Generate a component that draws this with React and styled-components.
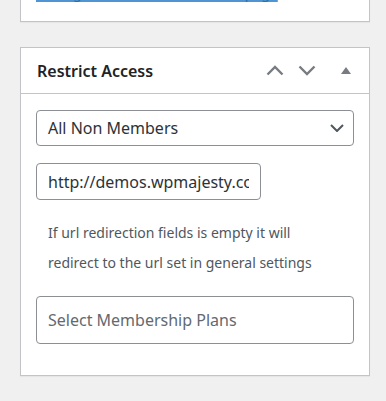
import React from 'react'
import styled, { createGlobalStyle } from 'styled-components'

const GlobalStyle = createGlobalStyle`
    html, body {
        margin: 0;
        padding: 0;
        background: #f0f0f1;
        font-family: "Segoe UI", "Noto Sans", sans-serif;
        color: #1d2327;
    }
`

const Sidebar = styled.div`
    width: 350px;
    padding: 0 16px 0 20px;
    overflow: hidden;
    height: 401px;
`

const Postbox = styled.div`
    background: #fff;
    border: 1px solid #c3c4c7;
    box-shadow: 0 1px 1px rgba(0, 0, 0, 0.04);
    margin-bottom: 25px;
`

const ClippedBox = styled(Postbox)`
    margin-top: -17px;
    border-top: none;
    padding: 0 15px 18px;
    font-size: 14px;
    line-height: 20px;
`

const SettingsLink = styled.a`
    color: #2271b1;
    text-decoration: underline;
    text-decoration-color: #4f94d4;
    text-decoration-thickness: 2px;
    text-underline-offset: 2px;
    text-decoration-skip-ink: none;
`

const Header = styled.div`
    display: flex;
    align-items: center;
    height: 45px;
    border-bottom: 1px solid #c3c4c7;
    padding-left: 16px;
`

const Title = styled.h2`
    flex: 1;
    margin: 0;
    font-size: 16px;
    font-weight: 600;
    color: #1d2327;
`

const HandleButton = styled.button`
    width: ${p => p.w}px;
    height: 36px;
    padding: 0;
    border: none;
    background: none;
    display: flex;
    align-items: center;
    justify-content: center;
    color: #787c82;
`

const Inside = styled.div`
    padding: 16px 15px 31px;
    display: flex;
    flex-direction: column;
    align-items: flex-start;
`

const Select = styled.div`
    box-sizing: border-box;
    width: 100%;
    height: 36px;
    border: 1px solid #8c8f94;
    border-radius: 4px;
    display: flex;
    align-items: center;
    justify-content: space-between;
    padding: 0 9px 0 11px;
    font-size: 16px;
    color: #2c3338;
`

const UrlInput = styled.input`
    box-sizing: border-box;
    margin-top: 17px;
    width: 225px;
    height: 37px;
    border: 1px solid #8c8f94;
    border-radius: 4px;
    padding: 0 11px;
    font-family: inherit;
    font-size: 16px;
    color: #2c3338;
    outline: none;
`

const Description = styled.p`
    margin: 18px 0 18px;
    padding-left: 12px;
    font-size: 14px;
    line-height: 30px;
    color: #50575e;
`

const PlanPicker = styled.div`
    box-sizing: border-box;
    width: 100%;
    height: 48px;
    border: 1px solid #8c8f94;
    border-radius: 4px;
    display: flex;
    align-items: center;
    padding: 0 11px;
    font-size: 16px;
    color: #646970;
`

const Chevron = ({ up, size = 18 }) => (
    <svg width={size} height={size / 2 + 2} viewBox="0 0 18 11" fill="none">
        <path
            d={up ? 'M1.5 9.5 L9 2 L16.5 9.5' : 'M1.5 1.5 L9 9 L16.5 1.5'}
            stroke="currentColor"
            strokeWidth="2.4"
        />
    </svg>
)

const App = () => {
    return (
        <>
            <GlobalStyle />
            <Sidebar>
                <ClippedBox>
                    <SettingsLink href="#">Manage restriction rules of this page</SettingsLink>
                </ClippedBox>
                <Postbox>
                    <Header>
                        <Title>Restrict Access</Title>
                        <HandleButton w={32}><Chevron up /></HandleButton>
                        <HandleButton w={32}><Chevron /></HandleButton>
                        <HandleButton w={46}>
                            <svg width="10" height="7" viewBox="0 0 10 7">
                                <path d="M0 7 L5 0 L10 7 Z" fill="currentColor" />
                            </svg>
                        </HandleButton>
                    </Header>
                    <Inside>
                        <Select>
                            <span>All Non Members</span>
                            <svg width="14" height="8" viewBox="0 0 14 8" fill="none">
                                <path d="M1 1 L7 7 L13 1" stroke="#50575e" strokeWidth="2" />
                            </svg>
                        </Select>
                        <UrlInput defaultValue="http://demos.wpmajesty.com/membership/login" />
                        <Description>
                            If url redirection fields is empty it will<br />
                            redirect to the url set in general settings
                        </Description>
                        <PlanPicker>Select Membership Plans</PlanPicker>
                    </Inside>
                </Postbox>
            </Sidebar>
        </>
    )
}

export default App
